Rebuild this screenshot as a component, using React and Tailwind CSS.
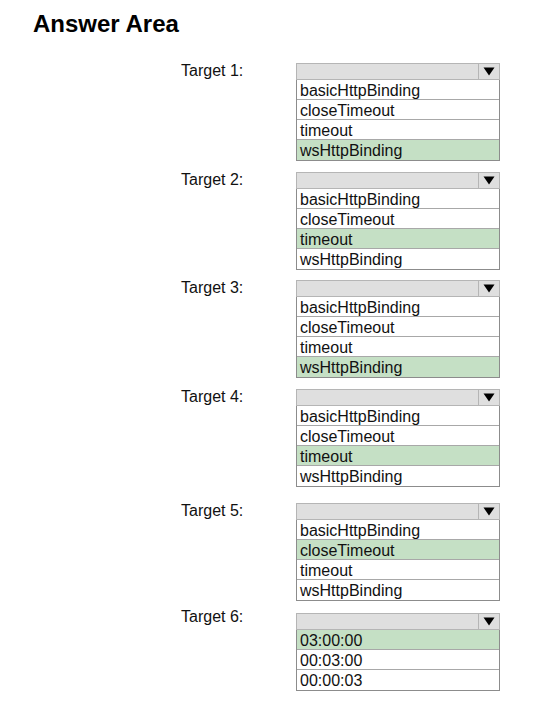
const options = ["basicHttpBinding", "closeTimeout", "timeout", "wsHttpBinding"];

const targets = [
  { label: "Target 1:", items: options, picked: 3, mt: "mt-[25px]", lift: "" },
  { label: "Target 2:", items: options, picked: 2, mt: "mt-[11px]", lift: "" },
  { label: "Target 3:", items: options, picked: 3, mt: "mt-[10px]", lift: "" },
  { label: "Target 4:", items: options, picked: 2, mt: "mt-[11px]", lift: "" },
  { label: "Target 5:", items: options, picked: 1, mt: "mt-[16px]", lift: "" },
  { label: "Target 6:", items: ["03:00:00", "00:03:00", "00:00:03"], picked: 0, mt: "mt-[12px]", lift: "-mt-[4px]" },
];

const Dropdown = ({ items, picked }) => (
  <div className="w-[204px]">
    <div className="flex h-[17px] border border-[#b5b5b5] bg-[#dfdfdf]">
      <div className="flex-1" />
      <div className="flex w-[21px] items-center justify-center border-l border-[#b5b5b5]">
        <svg width="12" height="9" viewBox="0 0 12 9">
          <path d="M0.5 0.5 L11.5 0.5 L6 8.5 Z" fill="#000" />
        </svg>
      </div>
    </div>
    <div className="border-x border-b border-[#8c8c8c] bg-white">
      {items.map((item, i) => (
        <div
          key={item}
          className={`h-[20px] pl-[3px] text-[16px] leading-[22px] text-[#111] ${
            i < items.length - 1 ? "border-b border-[#a8a8a8]" : ""
          } ${i === picked ? "bg-[#c5e0c5]" : ""}`}
        >
          {item}
        </div>
      ))}
    </div>
  </div>
);

export default function App() {
  return (
    <div
      className="min-h-[713px] w-[545px] bg-white text-black"
      style={{ fontFamily: '"Liberation Sans", Arial, sans-serif' }}
    >
      <h1 className="pl-[33px] pt-[10px] text-[24px] font-bold leading-[28px]">Answer Area</h1>
      {targets.map((t) => (
        <div key={t.label} className={`flex items-start ${t.mt}`}>
          <div className={`w-[115px] pl-[181px] box-content text-[16px] leading-4 text-[#111] ${t.lift}`}>
            {t.label}
          </div>
          <Dropdown items={t.items} picked={t.picked} />
        </div>
      ))}
    </div>
  );
}
